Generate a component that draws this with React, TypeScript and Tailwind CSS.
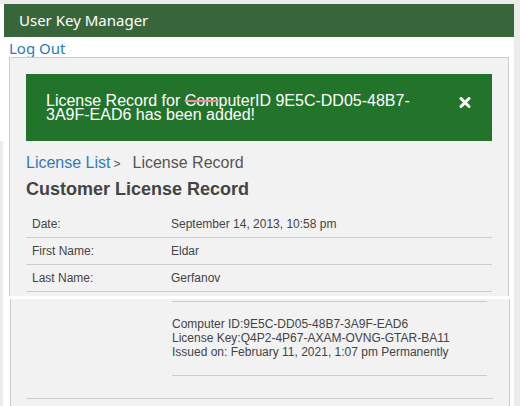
export default function App() {
  return (
    <div className="h-[406px] w-[520px] overflow-hidden bg-[#ebebeb] pr-[6px] pt-1 font-['Liberation_Sans',Arial,sans-serif] text-[#444]">
      <div className="flex h-full flex-col bg-white">
        <header className="ml-1 flex h-[33px] shrink-0 items-center bg-[#38663a] pl-[15px] font-['Noto_Sans',sans-serif] text-[15px] text-white">
          User Key Manager
        </header>
        <div className="h-[20px] shrink-0 pl-[9px]">
          <a href="#" className="font-['Noto_Sans',sans-serif] text-[15px] leading-[20px] text-[#2b7bb9]">
            Log Out
          </a>
        </div>

        <div className="flex min-h-0 flex-1">
          <div className="flex w-[3px] flex-col">
            <div className="mt-[84px] flex-1 bg-[#ebebeb]" />
          </div>
          <div className="ml-[6px] mr-[5px] flex flex-1 flex-col">
            {/* first part of the record */}
            <section className="h-[239px] shrink-0 overflow-hidden border-x border-t border-[#cccccc] bg-[#f2f2f2] px-4 pt-4">
              <div className="flex h-[67px] bg-[#21742a] pl-5 pr-[21px] pt-5 text-white">
                <p className="w-[395px] text-[16px] leading-[14px]">
                  License Record for{" "}
                  <span className="line-through decoration-[#f08a9c] decoration-2">Com</span>
                  puterID 9E5C-DD05-48B7-3A9F-EAD6 has been added!
                </p>
                <button type="button" className="ml-auto mt-[3px] h-[11px] w-[12px]" aria-label="Close">
                  <svg viewBox="0 0 12 11" className="h-[11px] w-[12px]">
                    <path d="M2 1.5 L10 9.5 M10 1.5 L2 9.5" stroke="white" strokeWidth="3" strokeLinecap="round" fill="none" />
                  </svg>
                </button>
              </div>

              <div className="mt-3 flex items-baseline leading-[20px]">
                <a href="#" className="text-[16px] text-[#337ab7]">License List</a>
                <span className="ml-[3px] text-[12px] text-[#555]">&gt;</span>
                <span className="ml-[12px] text-[16px] text-[#555]">License Record</span>
              </div>
              <h2 className="mt-1 text-[18px] font-bold leading-[22px] text-[#444]">Customer License Record</h2>

              <div className="mt-[11px] text-[12px]">
                {[
                  ["Date:", "September 14, 2013, 10:58 pm"],
                  ["First Name:", "Eldar"],
                  ["Last Name:", "Gerfanov"],
                ].map(([label, value]) => (
                  <div key={label} className="flex h-[27px] items-center border-b border-[#cccccc] pb-px">
                    <div className="w-[139px] pl-[6px]">{label}</div>
                    <div className="pl-[6px]">{value}</div>
                  </div>
                ))}
              </div>
            </section>

            <div className="h-[3px] shrink-0" />

            {/* further down the same record */}
            <section className="-mr-px ml-px flex-1 border-x border-[#cccccc] bg-[#f2f2f2] pl-[15px] pr-4 pt-[2px]">
              <div className="flex border-b border-[#cccccc] pb-[22px] text-[12px] leading-[14px]">
                <div className="w-[140px] shrink-0" />
                <div className="flex-1 px-[6px]">
                  <div className="border-y border-[#cccccc] pb-4 pt-[15px]">
                    <div>Computer ID:9E5C-DD05-48B7-3A9F-EAD6</div>
                    <div>License Key:Q4P2-4P67-AXAM-OVNG-GTAR-BA11</div>
                    <div>Issued on: February 11, 2021, 1:07 pm Permanently</div>
                  </div>
                </div>
              </div>
            </section>
          </div>
        </div>
      </div>
    </div>
  );
}
